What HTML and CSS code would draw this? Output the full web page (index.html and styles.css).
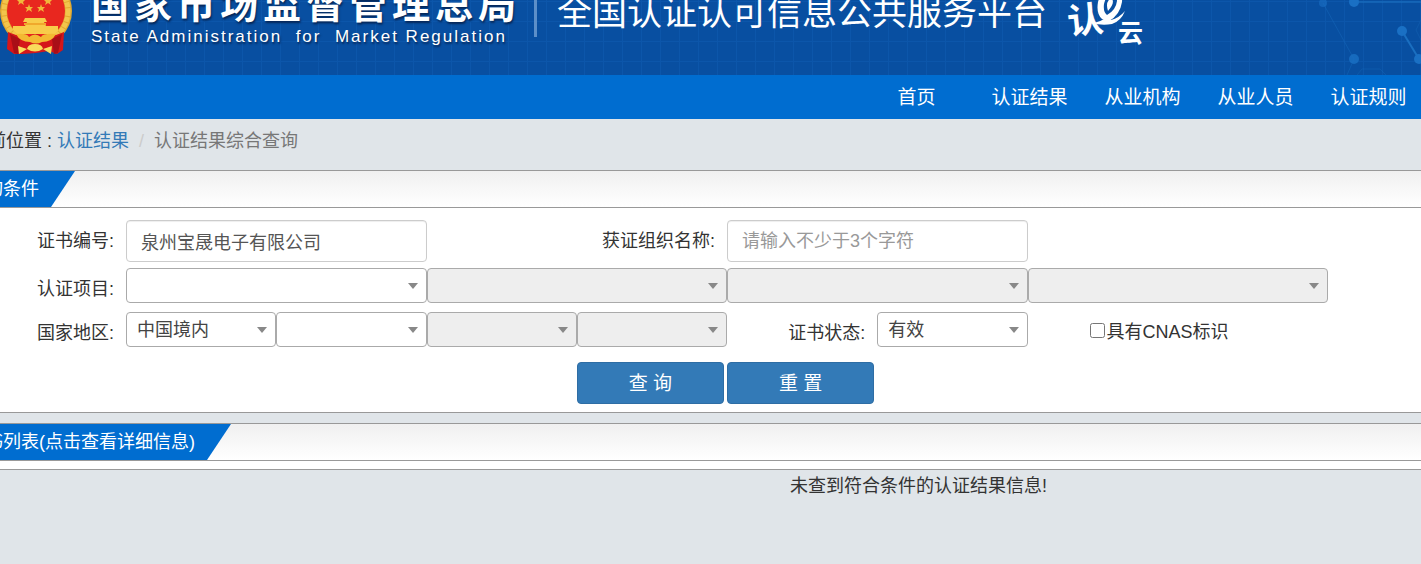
FILE: index.html
```html
<!DOCTYPE html>
<html lang="zh-CN">
<head>
  <meta charset="UTF-8">
  <title>全国认证认可信息公共服务平台</title>
  <link rel="stylesheet" href="styles.css">
</head>
<body>
  <div class="page">
    <header class="banner">
      <svg class="network" width="120" height="75" viewBox="0 0 120 75" aria-hidden="true">
        <g stroke="#1a6fc0" fill="none">
          <path d="M22 3 53 59 46 75" opacity=".4"/>
          <path d="M53 2H120" stroke-width="2" opacity=".6"/>
          <path d="M101 31 118 59" stroke-width="2"/>
          <path d="M120 20l-5 10 5 10M56 75l5-6h18l6 6" opacity=".3"/>
        </g>
        <g fill="#1a70c4">
          <circle cx="22" cy="3" r="4" opacity=".6"/>
          <circle cx="53" cy="2" r="5"/>
          <circle cx="101" cy="31" r="5"/>
          <circle cx="53" cy="59" r="5" opacity=".8"/>
          <circle cx="118" cy="59" r="5"/>
        </g>
      </svg>

      <svg class="emblem" width="72" height="82" viewBox="0 0 72 82" aria-hidden="true">
        <circle cx="36" cy="38" r="36" fill="#e2a92f"/>
        <circle cx="36" cy="38" r="32" fill="none" stroke="#f2c54c" stroke-width="5" stroke-dasharray="5 1"/>
        <circle cx="36" cy="38" r="29" fill="#e8271f"/>
        <path d="M8 59 16 62 28 64 36 60 44 64 56 62 64 59 63 77 57 81 49 78 36 80 22 81 14 81 7 76z" fill="#d5161a"/>
        <path d="M10 61 20 66 18 81 14 80zM62 61 52 66 54 81 58 80z" fill="#a90f17"/>
        <path d="M25 45h20l2 4h-3l2 4h12v5l-3 3H17l-4-4v-4h12l2-4h-4z" fill="#f8cc4a"/>
        <path d="M24 50h22v2H24z" fill="#f0a92c"/>
        <path d="M16 61q11-1 13 3 6-5 12 0 2-4 15-3-4 8-14 8-6 3-12 0-10 0-14-8z" fill="#f3b932"/>
        <path d="M35 71q7 0 8 5-8 5-16 0 1-5 8-5zM18 73l9 3-8 5zM52 73l-9 3 8 5z" fill="#f9dc5c"/>
        <g fill="#f1b83a">
          <path id="star" d="M29 31l1 3h3l-2 2 1 3-3-2-3 2 1-3-2-2h3z"/>
          <use href="#star" x="12"/>
          <use href="#star" x="-8" y="-7"/>
          <use href="#star" x="19" y="-7"/>
        </g>
      </svg>

      <div class="agency">
        <div class="agency-cn">国家市场监督管理总局</div>
        <div class="agency-en">State Administration&nbsp; for&nbsp; Market Regulation</div>
      </div>
      <h1 class="platform">全国认证认可信息公共服务平台</h1>

      <svg class="cloud-logo" width="78" height="60" viewBox="0 0 78 60" fill="#fff" role="img" aria-label="认e云">
        <text class="logo-ren" x="0" y="46" transform="rotate(-6 18 30)">认</text>
        <path d="M25 36Q34 35 40 30L44 33Q52 31 58 24Q54 34 45 37Q35 39 25 36z"/>
        <path fill-rule="evenodd" d="M35 32Q29 27 31 15Q34 3 45 3Q56 4 55 15Q53 28 42 34Q38 34 35 32zM40 28Q49 23 50 14Q50 7 45 7Q39 8 37 17Q36 25 40 28zM41 24Q38 15 44 11Q49 15 41 24z"/>
        <text class="logo-yun" x="51" y="55">云</text>
      </svg>
    </header>

    <nav class="nav">
      <a href="#">首页</a>
      <a href="#">认证结果</a>
      <a href="#">从业机构</a>
      <a href="#">从业人员</a>
      <a href="#">认证规则</a>
    </nav>

    <div class="breadcrumb">
      <span>当前位置 :</span>
      <a href="#">认证结果</a>
      <span class="sep">/</span>
      <span class="current">认证结果综合查询</span>
    </div>

    <section class="panel">
      <div class="panel-head"><h2>查询条件</h2></div>
      <form class="search">
        <div class="row">
          <label for="certNo">证书编号:</label>
          <input class="text span2" type="text" id="certNo" value="泉州宝晟电子有限公司">
          <label class="span2" for="orgName">获证组织名称:</label>
          <input class="text span2" type="text" id="orgName" placeholder="请输入不少于3个字符">
        </div>

        <div class="row row-select">
          <label for="item1">认证项目:</label>
          <select class="span2" id="item1"><option></option></select>
          <select class="span2" aria-label="认证项目二级" disabled><option></option></select>
          <select class="span2" aria-label="认证项目三级" disabled><option></option></select>
          <select class="span2" aria-label="认证项目四级" disabled><option></option></select>
        </div>

        <div class="row row-select">
          <label for="country">国家地区:</label>
          <select id="country"><option>中国境内</option></select>
          <select aria-label="省"><option></option></select>
          <select aria-label="市" disabled><option></option></select>
          <select aria-label="县" disabled><option></option></select>
          <label for="status">证书状态:</label>
          <select id="status"><option>有效</option></select>
          <div class="check span2">
            <input type="checkbox" id="cnas"><label for="cnas">具有CNAS标识</label>
          </div>
        </div>

        <div class="row row-buttons">
          <button type="button">查 询</button>
          <button type="reset">重 置</button>
        </div>
      </form>
    </section>

    <section class="panel panel-list">
      <div class="panel-head"><h2>证书列表(点击查看详细信息)</h2></div>
      <div class="list-gap"></div>
    </section>
    <p class="empty">未查到符合条件的认证结果信息!</p>
  </div>
</body>
</html>
```
FILE: styles.css
```css
* {
  box-sizing: border-box;
}

body {
  margin: 0;
  overflow-x: hidden;
  background: #e0e5e9;
  color: #333;
  font-family: "Liberation Sans", "Noto Sans CJK SC", sans-serif;
  font-size: 18px;
  line-height: 24px;
}

a {
  color: #337ab7;
  text-decoration: none;
}

/* the page runs off the left edge of the window */
.page {
  margin-left: -33px;
}

/* banner */
.banner {
  position: relative;
  display: flex;
  align-items: flex-end;
  height: 75px;
  padding: 0 0 20px 33px;
  overflow: hidden;
  color: #fff;
  white-space: nowrap;
  background-color: #084fa1;
  background-image:
    linear-gradient(#0c56aa 1px, transparent 1px),
    linear-gradient(90deg, #0c56aa 1px, transparent 1px);
  background-size: 19px 20px;
  background-position: 9px 1px;
}

.network {
  position: absolute;
  top: 0;
  right: 0;
}

.emblem {
  flex: none;
}

.agency {
  width: 443px;
  margin-left: 19px;
  padding-bottom: 6px;
  text-shadow: 1px 2px 2px #06285a;
}

.agency-cn {
  font-size: 38px;
  font-weight: bold;
  line-height: 40px;
  letter-spacing: 5px;
}

.agency-en {
  font-size: 17px;
  line-height: 24px;
  letter-spacing: 2px;
}

.platform {
  margin: 0 0 18px;
  padding-left: 20px;
  border-left: 3px solid #5c8fc9;
  font-size: 35px;
  font-weight: normal;
  line-height: 48px;
}

.cloud-logo {
  flex: none;
  margin: 0 0 8px 20px;
}

.logo-ren {
  font-size: 36px;
  font-weight: bold;
}

.logo-yun {
  font-size: 25px;
  font-weight: bold;
}

/* nav */
.nav {
  display: flex;
  justify-content: flex-end;
  margin-right: -4px;
  padding-top: 1px;
  background: #006dd0;
}

.nav a {
  width: 113px;
  color: #fff;
  font-size: 19px;
  line-height: 43px;
  text-align: center;
}

.breadcrumb {
  height: 51px;
  padding: 10px 0 0 3px;
}

.breadcrumb .sep {
  padding: 0 5px;
  color: #ccc;
}

.breadcrumb .current {
  color: #777;
}

/* panels */
.panel {
  margin-bottom: 10px;
  border: solid #999;
  border-width: 1px 0;
  background: #fff;
}

.panel-head {
  display: flex;
  border-bottom: 1px solid #999;
  background: linear-gradient(#f0f0f0, #fff);
}

.panel-head h2 {
  margin: 0;
  padding-right: 36px;
  background: #006dd0;
  color: #fff;
  font-size: 18px;
  font-weight: normal;
  line-height: 36px;
  clip-path: polygon(0 0, 100% 0, calc(100% - 24px) 100%, 0 100%);
}

.panel-list {
  margin-bottom: 4px;
}

.list-gap {
  height: 8px;
}

/* search form */
.search {
  padding: 12px 93px 8px 0;
}

.row {
  display: grid;
  grid-template-columns: 159px repeat(8, 1fr);
  margin-bottom: 6px;
}

.row > label {
  padding: 9px 12px 0 0;
  text-align: right;
}

.row-select {
  margin-bottom: 9px;
}

.span2 {
  grid-column: span 2;
}

.text,
select,
button {
  width: 100%;
  min-width: 0;
  margin: 0;
  border-radius: 4px;
  font-family: inherit;
  font-size: 18px;
}

.text {
  height: 42px;
  padding: 0 14px;
  border: 1px solid #ccc;
  box-shadow: inset 0 1px 1px #eee;
  color: #555;
}

.text::placeholder {
  color: #999;
}

select {
  height: 35px;
  padding: 0 24px 0 10px;
  border: 1px solid #aaa;
  appearance: none;
  background: #fff url("data:image/svg+xml,%3Csvg xmlns='http://www.w3.org/2000/svg' width='10' height='6'%3E%3Cpath d='M0 0h10L5 6z' fill='%23888'/%3E%3C/svg%3E") no-repeat right 8px center;
  color: #444;
}

select:disabled {
  background-color: #eee;
  opacity: 1;
}

.check {
  display: flex;
  align-items: center;
  padding: 5px 0 0 62px;
}

.check input {
  width: 15px;
  height: 15px;
  margin: 0 2px 4px 0;
}

.row-buttons {
  margin: 15px 0 0;
}

button {
  height: 42px;
  width: calc(100% - 3px);
  padding: 0 0 4px;
  border: 1px solid #2e6da4;
  background: #337ab7;
  color: #fff;
  font-size: 19px;
}

.row-buttons button:first-child {
  grid-column-start: 5;
}

.empty {
  margin: 0;
  padding-left: 823px;
}
```
